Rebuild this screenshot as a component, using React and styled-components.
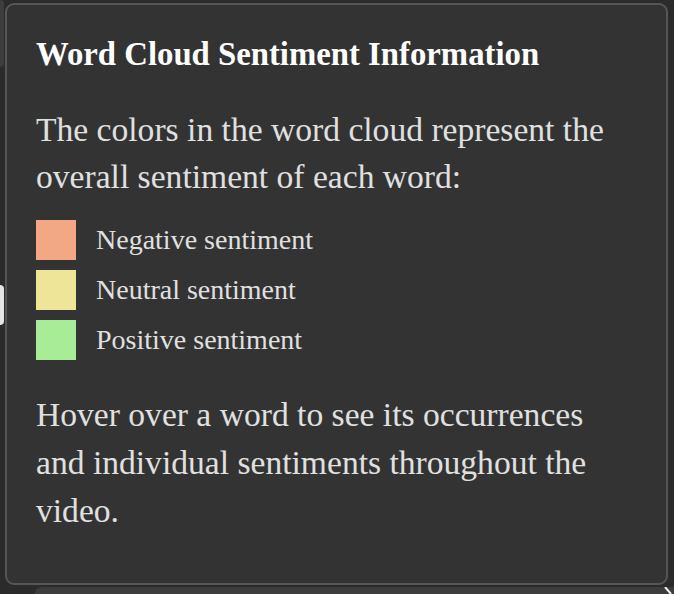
import React from "react";
import styled, { createGlobalStyle } from "styled-components";

const Global = createGlobalStyle`
  html, body { margin: 0; padding: 0; }
  body {
    background: #2b2b2b;
    font-family: "Liberation Serif", "Times New Roman", serif;
    width: 674px;
    height: 594px;
    overflow: hidden;
  }
`;

const Stage = styled.div`
  position: relative;
  width: 674px;
  height: 594px;
  overflow: hidden;
  background: #2b2b2b;
  display: grid;
  grid-template-columns: 4px 1fr;
`;

const Rail = styled.div`
  display: flex;
  flex-direction: column;
  gap: 218px;
`;

const RailTab = styled.div`
  height: ${p => p.$h}px;
  background: ${p => p.$bg};
  border-radius: 0 4px 4px 0;
`;

const Backdrop = styled.div`
  display: flex;
  flex-direction: column;
  justify-content: flex-end;
  padding-left: 31px;
`;

const BottomBar = styled.div`
  height: 7px;
  background: #3c3c3c;
  border-radius: 6px 0 0 0;
  display: flex;
  justify-content: flex-end;
`;

const Chevron = styled.svg`
  width: 10px;
  height: 7px;
  flex: none;
`;

const Panel = styled.div`
  position: absolute;
  left: 5px;
  top: 3px;
  width: 663px;
  height: 582px;
  box-sizing: border-box;
  background: #333333;
  border: 2px solid #565656;
  border-radius: 9px;
  padding: 30px 40px 30px 29px;
  color: #e0e0e0;
`;

const Title = styled.h3`
  margin: 0 0 33px;
  font-size: 32.76px;
  line-height: 38px;
  font-weight: bold;
  color: #ffffff;
`;

const Para = styled.p`
  margin: 0;
  font-size: 33.6px;
  line-height: ${p => p.$lh || 47}px;
`;

const Legend = styled.div`
  display: flex;
  flex-direction: column;
  gap: 10px;
  margin: 20px 0 31px;
`;

const Row = styled.div`
  display: flex;
  align-items: center;
  gap: 20px;
`;

const Swatch = styled.span`
  width: 40px;
  height: 40px;
  background: ${p => p.$color};
  flex: none;
`;

const Label = styled.span`
  font-size: 28px;
`;

const items = [
  { color: "#f3a885", label: "Negative sentiment" },
  { color: "#eee598", label: "Neutral sentiment" },
  { color: "#a8ec98", label: "Positive sentiment" },
];

export default function App() {
  return (
    <Stage>
      <Global />
      <Rail>
        <RailTab $h={67} $bg="#3d3d3d" />
        <RailTab $h={40} $bg="#e4e4e4" />
      </Rail>
      <Backdrop>
        <BottomBar>
          <Chevron viewBox="0 0 10 7">
            <path d="M1 0 L7 7" stroke="#f0f0f0" strokeWidth="2" fill="none" />
          </Chevron>
        </BottomBar>
      </Backdrop>
      <Panel>
        <Title>Word Cloud Sentiment Information</Title>
        <Para>The colors in the word cloud represent the overall sentiment of each word:</Para>
        <Legend>
          {items.map(i => (
            <Row key={i.label}>
              <Swatch $color={i.color} />
              <Label>{i.label}</Label>
            </Row>
          ))}
        </Legend>
        <Para $lh={48}>Hover over a word to see its occurrences and individual sentiments throughout the video.</Para>
      </Panel>
    </Stage>
  );
}
